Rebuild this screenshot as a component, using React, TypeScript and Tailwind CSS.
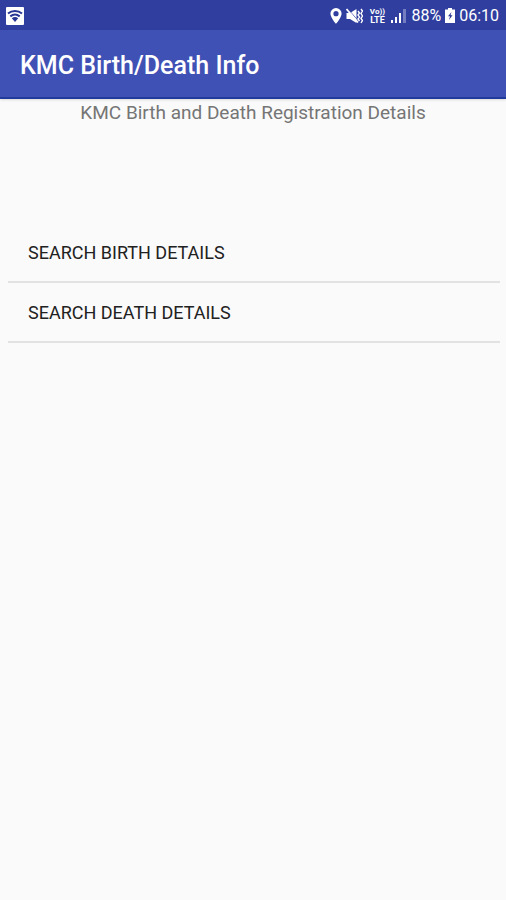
const records = [
  { label: 'SEARCH BIRTH DETAILS', href: '#birth' },
  { label: 'SEARCH DEATH DETAILS', href: '#death' },
];

function WifiBadge() {
  return (
    <svg width="18" height="18" viewBox="0 0 18 18" aria-hidden="true">
      <rect width="18" height="18" rx="1" fill="#fff" />
      <g fill="none" stroke="#283593" strokeWidth="2">
        <path d="M2 6.600C6 3.200 12 3.200 16 6.600" />
        <path d="M4.300 9.400c3-2.400 6.400-2.400 9.400 0" />
      </g>
      <path d="M5.800 11.200c2-1.500 4.400-1.500 6.400 0L9 15z" fill="#283593" />
    </svg>
  );
}

function LocationPin() {
  return (
    <svg width="12" height="16" viewBox="0 0 12 16" aria-hidden="true">
      <path
        d="M6 0a5.6 5.6 0 0 0-5.6 5.6C.4 9.6 6 16 6 16s5.6-6.4 5.6-10.4A5.6 5.6 0 0 0 6 0zm0 3.1a2.6 2.6 0 1 1 0 5.2 2.6 2.6 0 0 1 0-5.2z"
        fill="#fff"
      />
    </svg>
  );
}

// Speaker with a slash and the vibration zigzag
function VibrateMute() {
  return (
    <svg width="17" height="16" viewBox="0 0 17 16" aria-hidden="true">
      <path d="M0.500 5h3.500L10.500 1v14L4 11H0.500z" fill="#fff" />
      <path d="M2 1L11.500 12" stroke="#303f9f" strokeWidth="0.800" />
      <path d="M0.500 1L12 14.500" stroke="#fff" strokeWidth="1.800" />
      <path d="M12 3l1.500 2L12 7l1.500 2L12 11l1.500 2M15 1l1.500 2L15 5.500 16.500 8 15 10.500l1.500 2L15 15" fill="none" stroke="#fff" strokeWidth="1.400" />
    </svg>
  );
}

function Signal() {
  return (
    <svg width="16" height="15" viewBox="0 0 16 15" aria-hidden="true">
      <path d="M0 12h2v3H0zM4 9h2v6H4zM8 5h2v10H8z" fill="#fff" />
      <path d="M12 1h3v14h-3z" fill="#737dc0" />
    </svg>
  );
}

function Battery() {
  return (
    <svg width="10" height="15" viewBox="0 0 10 15" aria-hidden="true">
      <path d="M3 0h4v1.500h3V15H0V1.500h3z" fill="#fff" />
      <path d="M6.500 4L3 8.200h2L4 12l3.500-4.800H5.500z" fill="#283593" />
    </svg>
  );
}

function StatusBar() {
  return (
    <div className="flex h-[30px] items-center bg-[#303f9f] pt-px pr-[7px] pl-[6px] text-white">
      <WifiBadge />
      <div className="ml-auto flex items-center gap-1">
        <LocationPin />
        <VibrateMute />
        <div className="flex w-5 flex-col items-center text-[8px] leading-2 font-bold">
          <span>Vo))</span>
          <span className="text-[9px]">LTE</span>
        </div>
        <Signal />
        <span className="text-base leading-5">88%</span>
        <Battery />
        <span className="text-base leading-5">06:10</span>
      </div>
    </div>
  );
}

export default function App() {
  return (
    <div className="min-h-screen bg-[#fafafa] font-[Roboto,sans-serif]">
      <StatusBar />
      <header className="flex h-[69px] items-center border-b-2 border-[#223a9c] bg-[#3f51b5] px-5 pt-1 shadow-sm">
        <h1 className="text-[25px] leading-8 font-medium text-white">KMC Birth/Death Info</h1>
      </header>
      <main>
        <p className="pt-[2px] text-center text-[19px] leading-6 text-[#757575]">
          KMC Birth and Death Registration Details
        </p>
        <nav className="mt-[98px] pr-[6px] pl-2">
          <ul>
            {records.map(record => (
              <li key={record.href} className="border-b-2 border-[#e2e2e2]">
                <a href={record.href} className="flex h-[58px] items-center px-5 pt-[2px] text-lg text-[#212121]">
                  {record.label}
                </a>
              </li>
            ))}
          </ul>
        </nav>
      </main>
    </div>
  );
}
